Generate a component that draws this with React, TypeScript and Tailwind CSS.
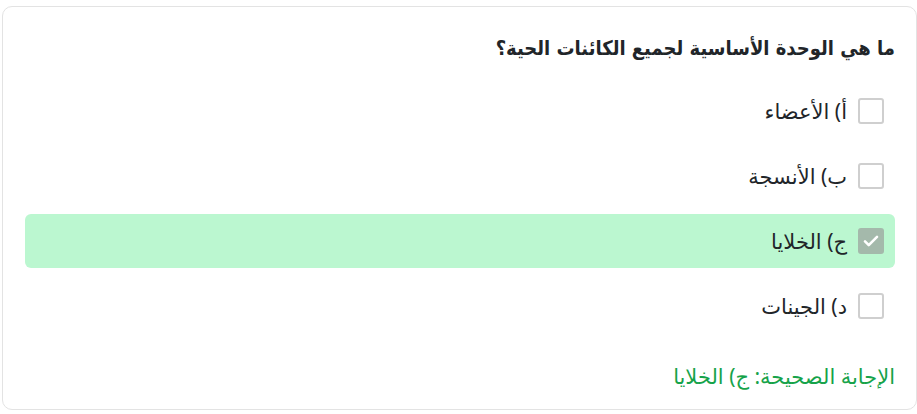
const options = [
    { key: "a", label: "أ) الأعضاء", correct: false },
    { key: "b", label: "ب) الأنسجة", correct: false },
    { key: "c", label: "ج) الخلايا", correct: true },
    { key: "d", label: "د) الجينات", correct: false },
];

export default function App() {
    return (
        <div dir="rtl" className="w-[917px] h-[414px] bg-white pt-[6px] pl-[2px] font-['Noto_Sans','DejaVu_Sans',sans-serif]">
            <div className="h-[404px] border border-[#e3e3e3] rounded-[10px] pl-[22px] pr-[21px] pt-[25px]">
                <h2 className="text-[20px] leading-[32px] font-bold text-[#212529] font-['DejaVu_Sans_Condensed','DejaVu_Sans',sans-serif]">
                    ما هي الوحدة الأساسية لجميع الكائنات الحية؟
                </h2>
                <div className="mt-[20px] flex flex-col gap-[11px]">
                    {options.map((o) => (
                        <Option key={o.key} label={o.label} correct={o.correct} />
                    ))}
                </div>
                <div className="mt-[28px] text-[21px] leading-[30px] text-[#16a34a]">الإجابة الصحيحة: ج) الخلايا</div>
            </div>
        </div>
    );
}

const Option = ({ label, correct }: { label: string; correct: boolean }) => (
    <div className={`h-[54px] flex items-center gap-[11px] px-[11px] rounded-[6px] ${correct ? "bg-[#bbf7d0]" : ""}`}>
        {correct ? (
            <span className="w-[26px] h-[26px] rounded-[3px] bg-[#a4b9ab] flex items-center justify-center">
                <svg width="18" height="18" viewBox="0 0 24 24" fill="none" stroke="white" strokeWidth="3.5" strokeLinecap="round" strokeLinejoin="round">
                    <path d="M4 12.5l5 5L20 6.5" />
                </svg>
            </span>
        ) : (
            <span className="w-[26px] h-[26px] rounded-[3px] border-2 border-[#cfcfcf] bg-white" />
        )}
        <span className="text-[21px] leading-[30px] text-[#212529]">{label}</span>
    </div>
);
